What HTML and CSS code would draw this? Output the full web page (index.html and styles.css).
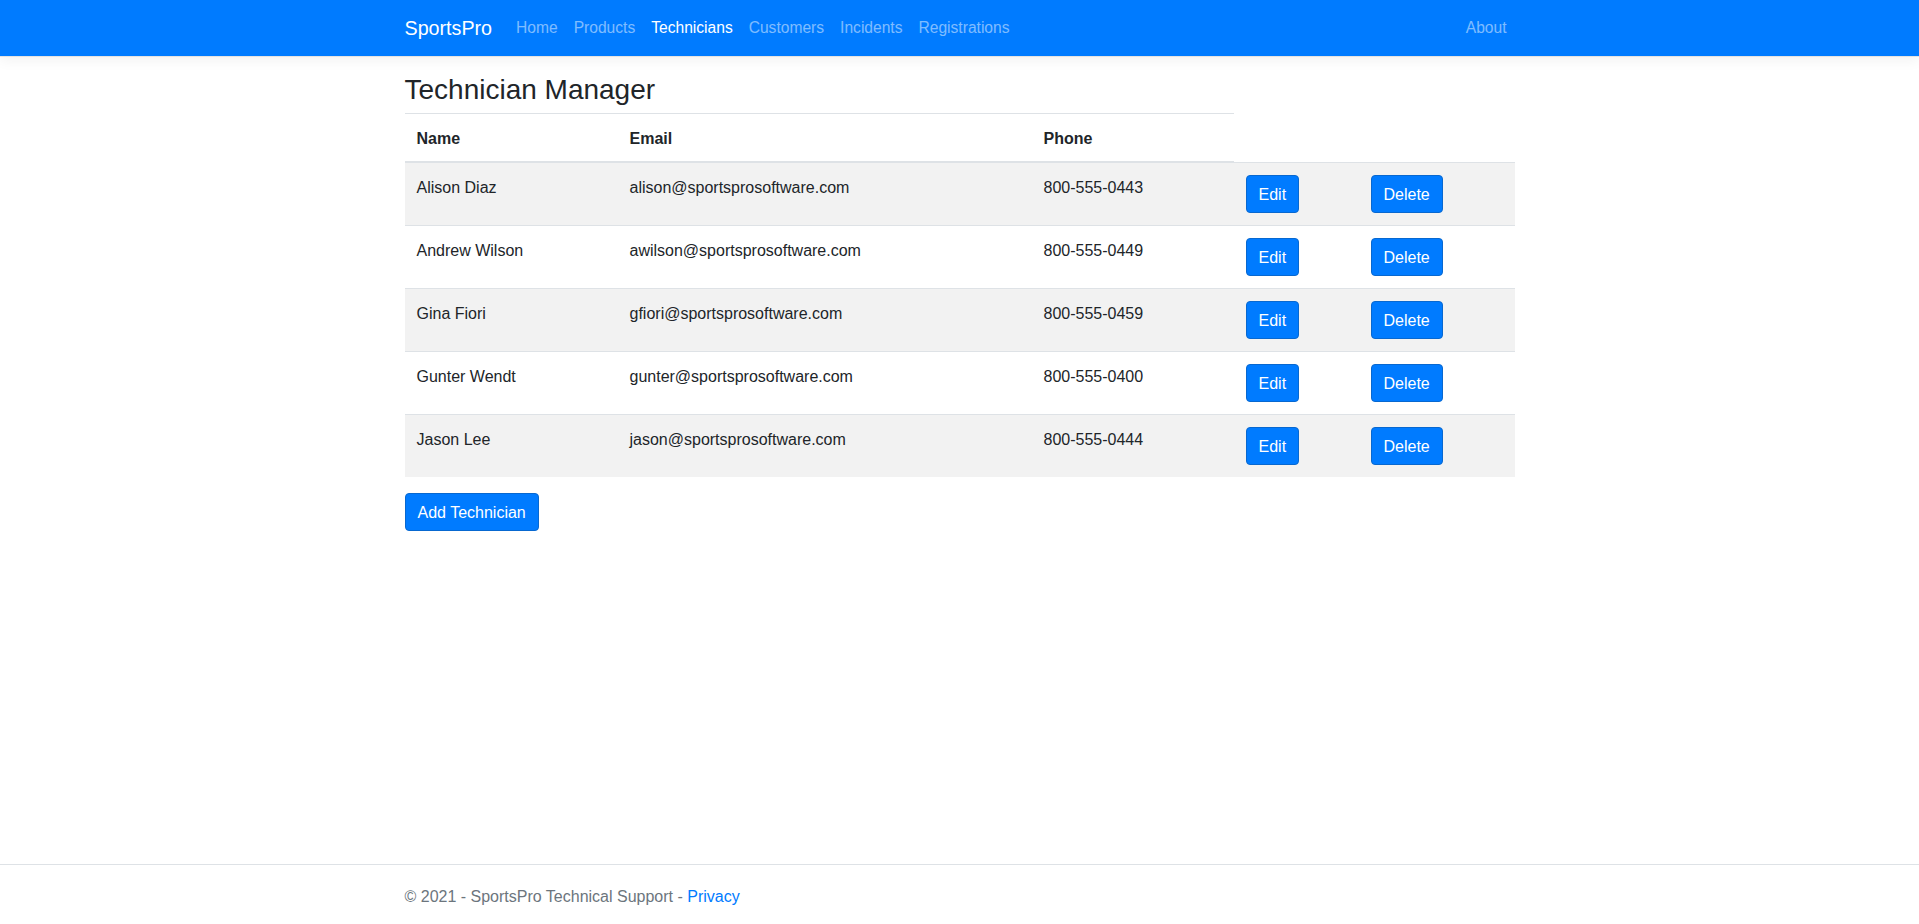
FILE: index.html
```html
<!DOCTYPE html>
<html lang="en">
<head>
<meta charset="utf-8">
<title>Technician Manager - SportsPro</title>
<link rel="stylesheet" href="styles.css">
</head>
<body>
<header class="navbar">
  <div class="container nav-inner">
    <a class="brand" href="#">SportsPro</a>
    <ul class="nav-links">
      <li><a class="nav-link" href="#">Home</a></li>
      <li><a class="nav-link" href="#">Products</a></li>
      <li><a class="nav-link active" href="#">Technicians</a></li>
      <li><a class="nav-link" href="#">Customers</a></li>
      <li><a class="nav-link" href="#">Incidents</a></li>
      <li><a class="nav-link" href="#">Registrations</a></li>
    </ul>
    <ul class="nav-links nav-right">
      <li><a class="nav-link" href="#">About</a></li>
    </ul>
  </div>
</header>

<main class="container main">
  <h3 class="page-title">Technician Manager</h3>
  <table class="table">
    <colgroup>
      <col class="c-name">
      <col class="c-email">
      <col class="c-phone">
      <col class="c-edit">
      <col class="c-delete">
    </colgroup>
    <thead>
      <tr>
        <th>Name</th>
        <th>Email</th>
        <th>Phone</th>
      </tr>
    </thead>
    <tbody>
      <tr>
        <td>Alison Diaz</td>
        <td>alison@sportsprosoftware.com</td>
        <td>800-555-0443</td>
        <td class="act"><a class="btn" href="#">Edit</a></td>
        <td class="act"><a class="btn" href="#">Delete</a></td>
      </tr>
      <tr>
        <td>Andrew Wilson</td>
        <td>awilson@sportsprosoftware.com</td>
        <td>800-555-0449</td>
        <td class="act"><a class="btn" href="#">Edit</a></td>
        <td class="act"><a class="btn" href="#">Delete</a></td>
      </tr>
      <tr>
        <td>Gina Fiori</td>
        <td>gfiori@sportsprosoftware.com</td>
        <td>800-555-0459</td>
        <td class="act"><a class="btn" href="#">Edit</a></td>
        <td class="act"><a class="btn" href="#">Delete</a></td>
      </tr>
      <tr>
        <td>Gunter Wendt</td>
        <td>gunter@sportsprosoftware.com</td>
        <td>800-555-0400</td>
        <td class="act"><a class="btn" href="#">Edit</a></td>
        <td class="act"><a class="btn" href="#">Delete</a></td>
      </tr>
      <tr>
        <td>Jason Lee</td>
        <td>jason@sportsprosoftware.com</td>
        <td>800-555-0444</td>
        <td class="act"><a class="btn" href="#">Edit</a></td>
        <td class="act"><a class="btn" href="#">Delete</a></td>
      </tr>
    </tbody>
  </table>
  <a class="btn" href="#">Add Technician</a>
</main>

<footer class="footer">
  <div class="container">
    &copy; 2021 - SportsPro Technical Support - <a class="footer-link" href="#">Privacy</a>
  </div>
</footer>
</body>
</html>
```

FILE: styles.css
```css
* {
  box-sizing: border-box;
}

html, body {
  margin: 0;
  padding: 0;
}

body {
  font-family: "Liberation Sans", Arial, sans-serif;
  font-size: 16px;
  line-height: 1.5;
  color: #212529;
  background: #fff;
  min-height: 100vh;
  display: flex;
  flex-direction: column;
}

a {
  text-decoration: none;
}

.container {
  width: 100%;
  max-width: 1140px;
  margin: 0 auto;
  padding: 0 15px;
}

/* Navbar */
.navbar {
  background: #007bff;
  border-bottom: 1px solid #e3e3e3;
  box-shadow: 0 4px 12px rgba(0, 0, 0, 0.05);
  padding: 8px 0;
  margin-bottom: 16px;
}

.nav-inner {
  display: flex;
  align-items: center;
}

.brand {
  color: #fff;
  font-size: 19.7px;
  line-height: 30px;
  padding: 3px 0;
  margin-right: 16px;
}

.nav-links {
  list-style: none;
  margin: 0;
  padding: 0;
  display: flex;
  flex: 1;
}

.nav-right {
  flex: 0 0 auto;
}

.nav-link {
  display: block;
  padding: 8px;
  font-size: 15.6px;
  line-height: 24px;
  color: rgba(255, 255, 255, 0.5);
}

.nav-link.active {
  color: #fff;
}

/* Main */
.main {
  flex: 0 0 auto;
}

.page-title {
  font-size: 28px;
  font-weight: 400;
  line-height: 31px;
  padding-top: 1px;
  margin: 0 0 8px;
}

.table {
  width: 100%;
  table-layout: fixed;
  border-collapse: collapse;
  margin-bottom: 16px;
}

.c-name { width: 213px; }
.c-email { width: 414px; }
.c-phone { width: 202px; }
.c-edit { width: 125px; }
.c-delete { width: 156px; }

.table th,
.table td {
  padding: 13px 12px 11px;
  vertical-align: top;
  text-align: left;
  border-top: 1px solid #dee2e6;
}

.table th {
  font-weight: 700;
  padding-bottom: 10px;
  border-bottom: 2px solid #dee2e6;
}

.table td.act {
  padding-top: 12px;
  padding-bottom: 12px;
}

.table tbody tr:nth-child(odd) {
  background: #f2f2f2;
}

.btn {
  display: inline-block;
  padding: 7px 12px 5px;
  font-size: 16px;
  line-height: 24px;
  color: #fff;
  background: #007bff;
  border: 1px solid #0868d0;
  border-radius: 4px;
}

/* Footer */
.footer {
  margin-top: auto;
  border-top: 1px solid #dee2e6;
  color: #6c757d;
  padding-top: 4px;
  line-height: 55px;
  white-space: nowrap;
}

.footer-link {
  color: #007bff;
}
```
